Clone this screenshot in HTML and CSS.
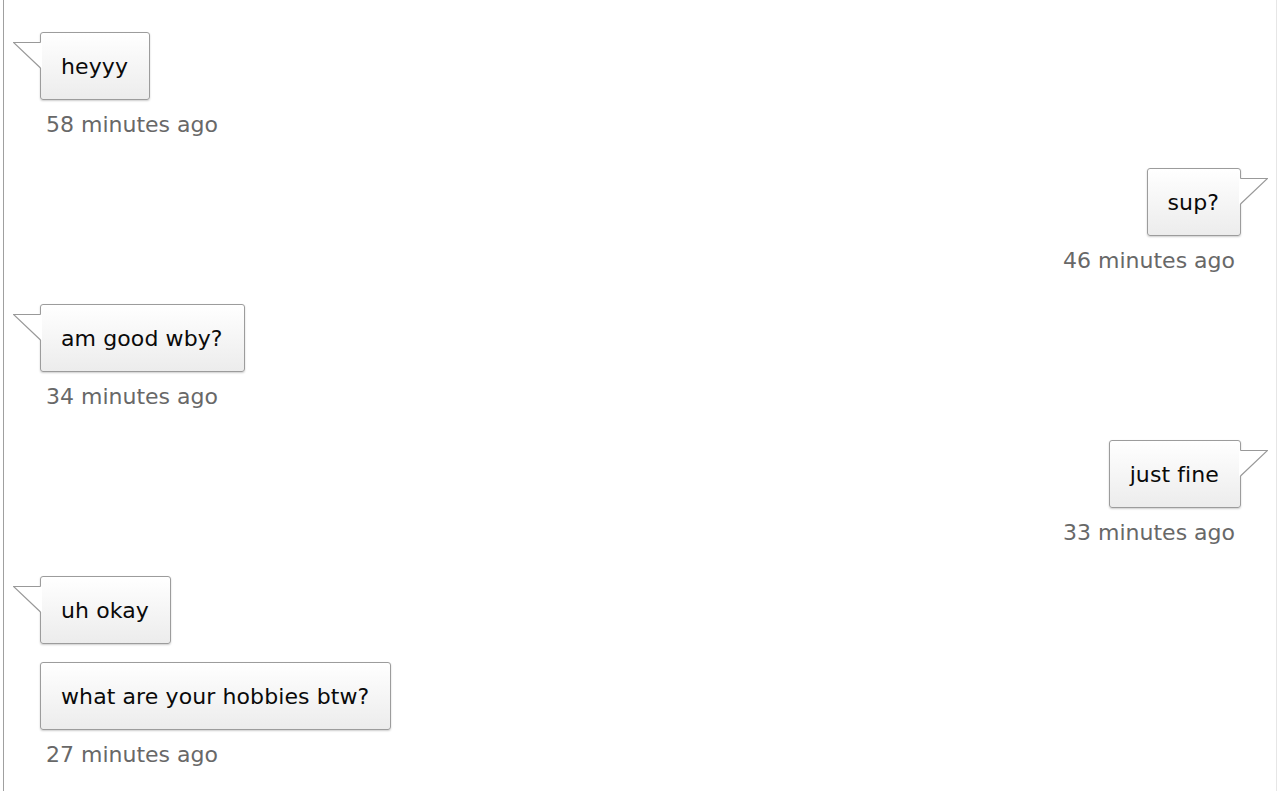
FILE: index.html
```html
<!DOCTYPE html>
<html lang="en">
<head>
    <meta charset="UTF-8">
    <meta name="viewport" content="width=device-width, initial-scale=1.0">
    <title>Chat</title>
    <link rel="stylesheet" href="styles.css">
</head>
<body>

    <!-- Conversation -->
    <div class="chat">

        <div class="group them">
            <div class="bubble tail">
                heyyy
                <svg class="tail-icon" width="29" height="27" viewBox="0 0 29 27"><polygon points="0.5,0.5 29,0.5 29,26 27.5,26" fill="#fff"/><polyline points="27.5,0.5 0.5,0.5 27.5,26" fill="none" stroke="#999" stroke-width="1.2"/></svg>
            </div>
            <div class="time">58 minutes ago</div>
        </div>

        <div class="group me">
            <div class="bubble tail">
                sup?
                <svg class="tail-icon" width="29" height="27" viewBox="0 0 29 27"><polygon points="0.5,0.5 29,0.5 29,26 27.5,26" fill="#fff"/><polyline points="27.5,0.5 0.5,0.5 27.5,26" fill="none" stroke="#999" stroke-width="1.2"/></svg>
            </div>
            <div class="time">46 minutes ago</div>
        </div>

        <div class="group them">
            <div class="bubble tail">
                am good wby?
                <svg class="tail-icon" width="29" height="27" viewBox="0 0 29 27"><polygon points="0.5,0.5 29,0.5 29,26 27.5,26" fill="#fff"/><polyline points="27.5,0.5 0.5,0.5 27.5,26" fill="none" stroke="#999" stroke-width="1.2"/></svg>
            </div>
            <div class="time">34 minutes ago</div>
        </div>

        <div class="group me">
            <div class="bubble tail">
                just fine
                <svg class="tail-icon" width="29" height="27" viewBox="0 0 29 27"><polygon points="0.5,0.5 29,0.5 29,26 27.5,26" fill="#fff"/><polyline points="27.5,0.5 0.5,0.5 27.5,26" fill="none" stroke="#999" stroke-width="1.2"/></svg>
            </div>
            <div class="time">33 minutes ago</div>
        </div>

        <div class="group them">
            <div class="bubble tail">
                uh okay
                <svg class="tail-icon" width="29" height="27" viewBox="0 0 29 27"><polygon points="0.5,0.5 29,0.5 29,26 27.5,26" fill="#fff"/><polyline points="27.5,0.5 0.5,0.5 27.5,26" fill="none" stroke="#999" stroke-width="1.2"/></svg>
            </div>
            <div class="bubble">what are your hobbies btw?</div>
            <div class="time">27 minutes ago</div>
        </div>

    </div>

</body>
</html>
```

FILE: styles.css
```css
body {
    margin: 0;
    background: #fff;
    font-family: "DejaVu Sans", Verdana, sans-serif;
}

/* Chat column */
.chat {
    margin: 0 2px 0 3px;
    padding: 32px 35px 20px 36px;
    min-height: 791px;
    box-sizing: border-box;
    border-left: 1px solid #a0a0a0;
    border-right: 1px solid #e6e6e6;
    display: flex;
    flex-direction: column;
    gap: 30px;
}

/* One message group */
.group {
    display: flex;
    flex-direction: column;
    align-items: flex-start;
    gap: 18px;
}

.group.me {
    align-items: flex-end;
}

/* Bubble */
.bubble {
    position: relative;
    padding: 21px 21px 19px 20px;
    font-size: 22px;
    line-height: 26px;
    letter-spacing: 0.1px;
    color: #0a0a0a;
    border: 1px solid #9c9c9c;
    border-radius: 3px;
    background: linear-gradient(#ffffff, #ececec);
    box-shadow: 0 1px 2px rgba(0, 0, 0, 0.2);
}

.tail-icon {
    position: absolute;
    top: 9px;
    left: -28px;
}

.me .tail-icon {
    left: auto;
    right: -28px;
    transform: scaleX(-1);
}

/* Timestamp */
.time {
    margin-top: -6px;
    padding: 0 6px;
    font-size: 22px;
    line-height: 26px;
    color: #686868;
}
```
